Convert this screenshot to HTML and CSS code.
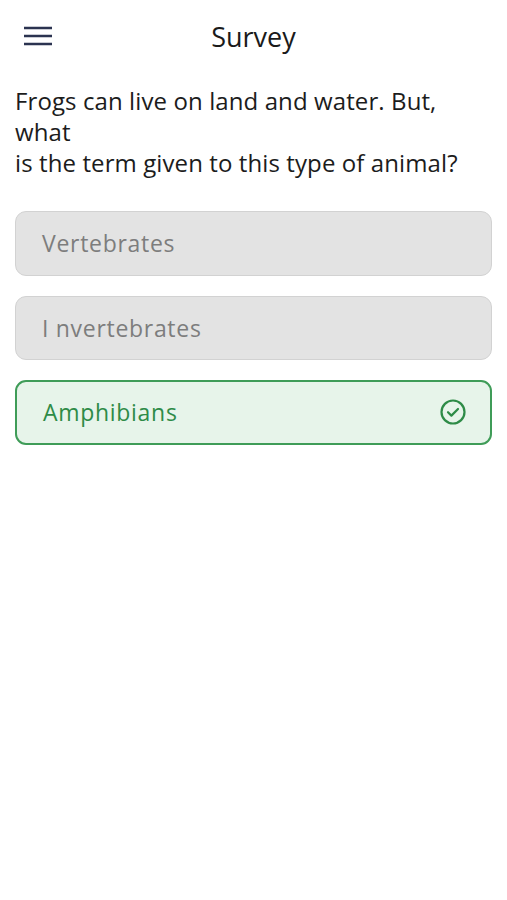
FILE: index.html
```html
<!DOCTYPE html>
<html lang="en">

<head>
    <meta charset="UTF-8">
    <meta name="viewport" content="width=device-width, initial-scale=1.0">
    <title>Survey</title>
    <link rel="stylesheet" href="styles.css">
</head>

<body>
    <header class="top-bar">
        <button class="menu-btn" aria-label="Menu">
            <svg width="30" height="22" viewBox="0 0 30 22">
                <path d="M1 3h28M1 11h28M1 19h28" stroke="#2b3350" stroke-width="2.4" fill="none" />
            </svg>
        </button>
        <h1 class="title">Survey</h1>
        <span></span>
    </header>

    <main class="survey">
        <p class="question">Frogs can live on land and water. But,<br>what<br>is the term given to this type of animal?</p>

        <div class="options">
            <div class="option">Vertebrates</div>
            <div class="option">I nvertebrates</div>
            <div class="option selected">
                <span>Amphibians</span>
                <svg width="28" height="28" viewBox="0 0 28 28">
                    <circle cx="14" cy="14" r="11.5" stroke="#2e8b47" stroke-width="2.2" fill="none" />
                    <path d="M9 14.2l3.4 3.4 6.6-6.6" stroke="#2e8b47" stroke-width="2.2" fill="none"
                        stroke-linecap="round" stroke-linejoin="round" />
                </svg>
            </div>
        </div>
    </main>
</body>

</html>
```

FILE: styles.css
```css
body {
    margin: 0;
    font-family: "Open Sans", "Noto Sans", sans-serif;
    background-color: #ffffff;
    color: #1c1c1c;
}

.top-bar {
    display: grid;
    grid-template-columns: 1fr auto 1fr;
    align-items: center;
    height: 72px;
    padding: 0 23px;
}

.menu-btn {
    justify-self: start;
    padding: 0;
    border: none;
    background: none;
    display: flex;
}

.title {
    margin: 0;
    font-size: 27px;
    font-weight: 400;
    color: #1a1a1a;
}

.survey {
    padding: 0 15px;
}

.question {
    margin: 13px 0 0;
    font-size: 24px;
    line-height: 31px;
    letter-spacing: 0.1px;
    color: #1c1c1c;
}

.options {
    display: flex;
    flex-direction: column;
    gap: 20px;
    margin-top: 33px;
}

.option {
    display: flex;
    align-items: center;
    justify-content: space-between;
    height: 64.5px;
    box-sizing: border-box;
    padding: 0 23px 0 26px;
    border: 1.5px solid #d2d2d2;
    border-radius: 11px;
    background-color: #e3e3e3;
    color: #7d7d7d;
    font-size: 23px;
    letter-spacing: 0.7px;
}

.option.selected {
    border: 2px solid #3f9c58;
    background-color: #e7f4ea;
    color: #2e8b47;
}
```
